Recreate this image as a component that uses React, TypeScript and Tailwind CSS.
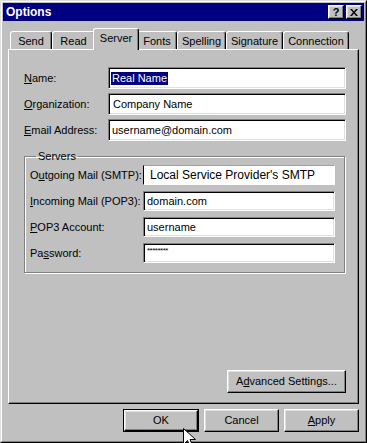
import React from "react";

const sunken =
  "bg-white border border-t-[#808080] border-l-[#808080] border-r-white border-b-white shadow-[inset_1px_1px_0_#000,inset_-1px_-1px_0_#dfdfdf]";
const raised =
  "bg-[#c0c0c0] border border-t-white border-l-white border-r-black border-b-black shadow-[inset_-1px_-1px_0_#808080,inset_1px_1px_0_#dfdfdf]";

function Field({ label, children, w }: { label: React.ReactNode; children?: React.ReactNode; w: string }) {
  return (
    <div className="flex items-center h-[22px]">
      <div className={w}>{label}</div>
      <div className={`${sunken} flex-1 h-full flex items-center pl-[2px] overflow-hidden whitespace-nowrap`}>{children}</div>
    </div>
  );
}

function SField({ label, children, special }: { label: React.ReactNode; children?: React.ReactNode; special?: boolean }) {
  return (
    <div className="flex items-center h-[20px]">
      <div className="w-[113px]">{label}</div>
      <div
        className={
          special
            ? "bg-white border border-t-[#a0a0a0] border-l-black border-r-white border-b-white flex-1 h-full flex items-center pl-[6px] text-[12px] whitespace-nowrap overflow-hidden"
            : `${sunken} flex-1 h-full flex items-center pl-[3px] whitespace-nowrap overflow-hidden`
        }
      >
        {children}
      </div>
    </div>
  );
}

const tabs = [
  { t: "Send", w: "w-[42px]" },
  { t: "Read", w: "w-[43px]" },
  { t: "Server", w: "w-[46px]", sel: true },
  { t: "Fonts", w: "w-[40px]" },
  { t: "Spelling", w: "w-[49px]" },
  { t: "Signature", w: "w-[57px]" },
  { t: "Connection", w: "w-[66px]" },
];

export default function App() {
  return (
    <div className="relative w-[367px] h-[443px] bg-[#c0c0c0] text-[11px] leading-[13px] text-black font-['Liberation_Sans',Arial,sans-serif] border border-t-[#dfdfdf] border-l-[#dfdfdf] border-r-black border-b-black">
      <div className="h-full flex flex-col p-[1px] border border-t-white border-l-white border-r-[#808080] border-b-[#808080]">
        {/* title bar */}
        <div className="h-[18px] bg-[#000080] flex items-center justify-between pl-[3px] pr-[2px]">
          <span className="text-white font-bold text-[12px]">Options</span>
          <div className="flex gap-[2px]">
            <div className={`${raised} w-[16px] h-[14px] flex items-center justify-center font-bold text-[11px] leading-none`}>?</div>
            <div className={`${raised} w-[16px] h-[14px] flex items-center justify-center`}>
              <svg width="8" height="7" viewBox="0 0 8 7">
                <path d="M0 0h2l2 2.5L6 0h2L5 3.5 8 7H6L4 4.5 2 7H0l3-3.5z" fill="#000" />
              </svg>
            </div>
          </div>
        </div>

        <div className="flex-1 flex flex-col px-[5px] pt-[7px]">
          {/* tabs */}
          <div className="flex items-end h-[21px] pl-[2px]">
            {tabs.map((tb) =>
              tb.sel ? (
                <div
                  key={tb.t}
                  className={`${tb.w} relative z-10 -mx-[2px] h-[22px] -mb-[1px] bg-[#c0c0c0] border-t border-l border-t-white border-l-white border-r border-r-black rounded-t-[3px] shadow-[inset_-1px_0_0_#808080] flex justify-center pt-[3px]`}
                >
                  {tb.t}
                </div>
              ) : (
                <div
                  key={tb.t}
                  className={`${tb.w} h-[18px] border-t border-l border-t-white border-l-white border-r border-r-black rounded-t-[3px] shadow-[inset_-1px_0_0_#808080] flex justify-center pt-[3px]`}
                >
                  {tb.t}
                </div>
              )
            )}
          </div>

          {/* panel */}
          <div className="h-[355px] flex flex-col border border-t-white border-l-white border-r-black border-b-black shadow-[inset_-1px_-1px_0_#808080] pt-[17px] pl-[15px] pr-[12px] pb-[10px]">
            <div className="flex flex-col gap-[4px]">
              <Field w="w-[84px]" label={<><u>N</u>ame:</>}>
                <span className="bg-[#000080] text-white px-[1px]">Real Name</span>
              </Field>
              <Field w="w-[84px]" label={<><u>O</u>rganization:</>}>
                <span className="pl-[2px]">Company Name</span>
              </Field>
              <Field w="w-[84px]" label={<><u>E</u>mail Address:</>}>
                <span className="pl-[1px]">username@domain.com</span>
              </Field>
            </div>

            <fieldset className="mt-[9px] mr-[1px] border border-[#808080] shadow-[1px_1px_0_#fff,inset_1px_1px_0_#fff] pl-[5px] pr-[9px] pt-[2px] pb-[9px]">
              <legend className="ml-[6px] px-[2px]">Servers</legend>
              <div className="flex flex-col gap-[6px]">
                <SField special label={<>O<u>u</u>tgoing Mail (SMTP):</>}>
                  Local Service Provider's SMTP
                </SField>
                <SField label={<><u>I</u>ncoming Mail (POP3):</>}>domain.com</SField>
                <SField label={<><u>P</u>OP3 Account:</>}>username</SField>
                <SField label={<>Pa<u>s</u>sword:</>}>
                  <span className="text-[8px] leading-none tracking-[-0.5px] -mt-[4px]">********</span>
                </SField>
              </div>
            </fieldset>

            <div className="mt-auto flex justify-end">
              <button className={`${raised} w-[119px] h-[23px] flex items-center justify-center`}>
                A<u>d</u>vanced Settings...
              </button>
            </div>
          </div>

          {/* bottom buttons */}
          <div className="mt-[5px] flex justify-end gap-[5px]">
            <div className="border border-black w-[76px] h-[23px]">
              <button className={`${raised} w-full h-full flex items-center justify-center`}>OK</button>
            </div>
            <button className={`${raised} w-[75px] h-[23px] flex items-center justify-center`}>Cancel</button>
            <button className={`${raised} w-[75px] h-[23px] flex items-center justify-center`}>
              <u>A</u>pply
            </button>
          </div>
        </div>
      </div>

      {/* mouse cursor */}
      <svg className="absolute left-[182px] top-[427px]" width="13" height="20" viewBox="0 0 13 20">
        <path d="M0.5 0.5V16.5L4.5 12.5L7.5 19.5L10 18.5L7 11.5H12.5Z" fill="#fff" stroke="#000" strokeWidth="1" />
      </svg>
    </div>
  );
}
